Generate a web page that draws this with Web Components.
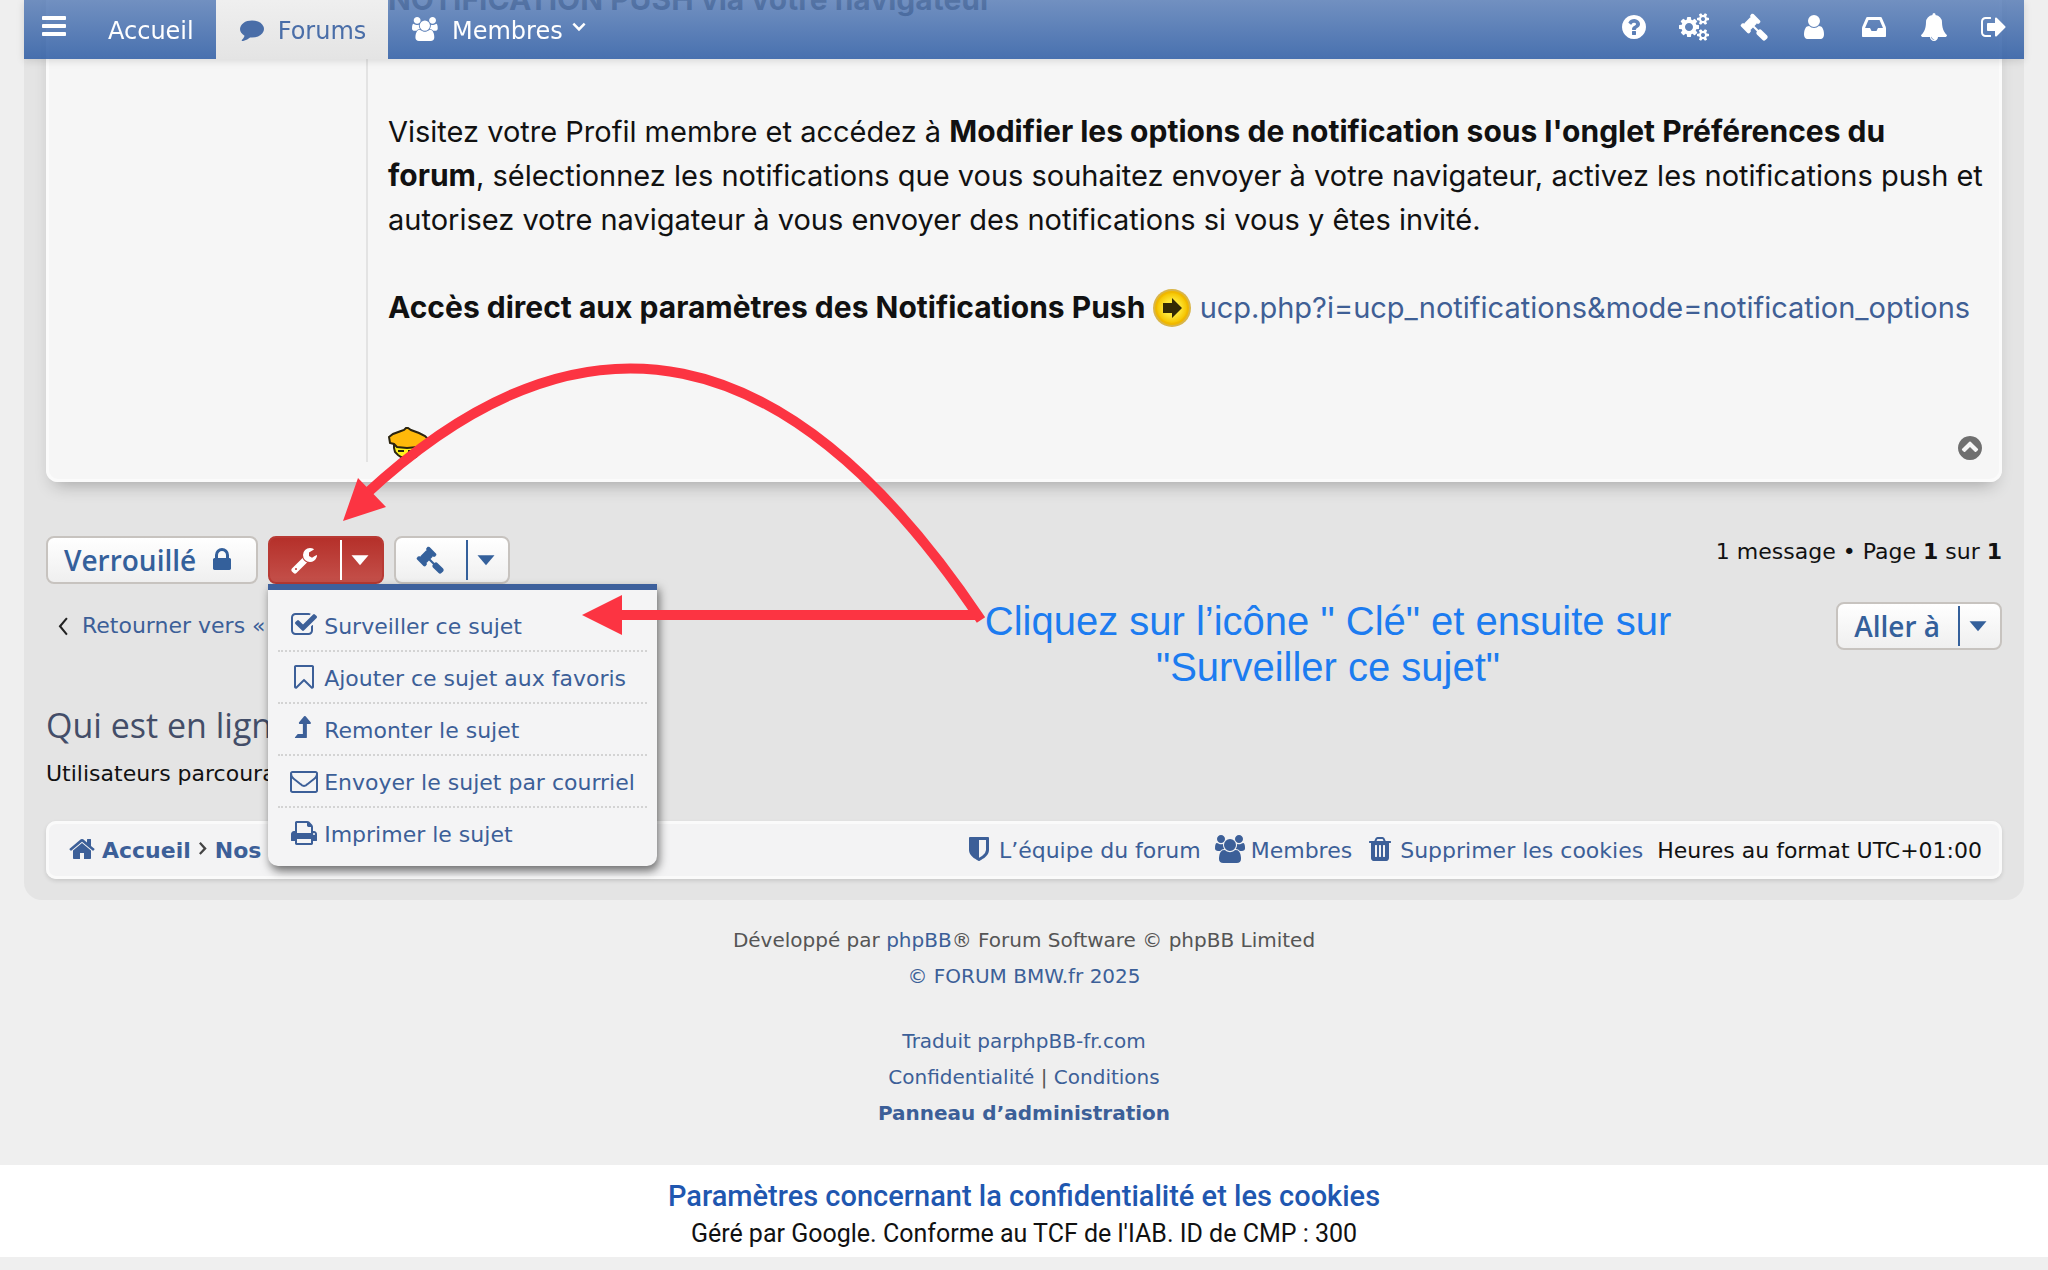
<!DOCTYPE html>
<html lang="fr">
<head>
<meta charset="utf-8">
<title>FORUM BMW.fr</title>
<style>
    body{
        margin: 0;
        background: #efefef;
        color: #111;
        font: 22px/32px "DejaVu Sans", Verdana, sans-serif;
        overflow-x: hidden;
    }
    main{
        position: relative;
        margin: 0 24px;
        padding: 0 22px 21px;
        background: #e4e4e4;
        border-radius: 0 0 18px 18px;
    }
</style>
</head>
<body>
<forum-nav></forum-nav>
<main>
    <forum-post>
        <b>NOTIFICATION PUSH via votre navigateur</b><br><br><br>
        Visitez votre Profil membre et accédez à <b>Modifier les options de notification sous l'onglet Préférences du</b><br>
        <b>forum</b>, sélectionnez les notifications que vous souhaitez envoyer à votre navigateur, activez les notifications push et autorisez votre navigateur à vous envoyer des notifications si vous y êtes invité.<br><br>
        <b>Accès direct aux paramètres des Notifications Push</b>
        <smiley-icon name="arrow"></smiley-icon>
        <a href="#">ucp.php?i=ucp_notifications&amp;mode=notification_options</a><br><br><br>
        <smiley-icon name="hat"></smiley-icon>
    </forum-post>
    <topic-actions></topic-actions>
    <who-online></who-online>
    <bottom-bar></bottom-bar>
    <arrow-note>Cliquez sur l’icône " Clé" et ensuite sur<br>"Surveiller ce sujet"</arrow-note>
</main>
<site-footer></site-footer>
<cookie-bar></cookie-bar>

<script>
// clase base: monta la plantilla en el shadow root
class BaseElement extends HTMLElement{
    constructor(){
        super();
        this.attachShadow({mode: 'open'});
    }
    render(){
        const template = document.createElement('template');
        template.innerHTML = `<style>${this.getStyle()}</style>${this.getTemplate()}`;
        this.shadowRoot.replaceChildren(template.content.cloneNode(true));
    }
    connectedCallback(){
        this.render();
    }
}

const circle = 'm371-243q0 209-103 385.5t-279.5 279.5-385.5 103-385.5-103-279.5-279.5-103-385.5 103-385.5 279.5-279.5 385.5-103 385.5 103 279.5 279.5 103 385.5z';
const smallCog = 'v140q0 16-149 31-12 27-30 52 51 113 51 138 0 4-4 7-122 71-124 71-8 0-46-47t-52-68q-20 2-30 2t-30-2q-14 21-52 68t-46 47q-2 0-124-71-4-3-4-7 0-25 51-138-18-25-30-52-149-15-149-31v-140q0-16 149-31 13-29 30-52-51-113-51-138 0-4 4-7 4-2 35-20t59-34 30-16q8 0 46 46.5t52 67.5q20-2 30-2t30 2q51-71 92-112l6-2q4 0 124 70 4 3 4 7 0 25-51 138 17 23 30 52 149 15 149 31z';

const icons = {
    bars: 'M1664 1344v128q0 26-19 45t-45 19h-1408q-26 0-45-19t-19-45v-128q0-26 19-45t45-19h1408q26 0 45 19t19 45zm0-512v128q0 26-19 45t-45 19h-1408q-26 0-45-19t-19-45v-128q0-26 19-45t45-19h1408q26 0 45 19t19 45zm0-512v128q0 26-19 45t-45 19h-1408q-26 0-45-19t-19-45v-128q0-26 19-45t45-19h1408q26 0 45 19t19 45z',
    comment: 'M1792 896q0 174-120 321.5t-326 233-450 85.5q-70 0-145-8-198 175-460 242-49 14-114 22-17 2-30.5-9t-17.5-29v-1q-3-4-.5-12t2-10 4.5-9.5l6-9 7-8.5 8-9q7-8 31-34.5t34.5-38 31-39.5 32.5-51 27-59 26-76q-157-89-247.5-220t-90.5-281q0-130 71-248.5t191-204.5 286-136.5 348-50.5q244 0 450 85.5t326 233 120 321.5z',
    users: 'M593 896q-162 5-265 128h-134q-82 0-138-40.5t-56-118.5q0-353 124-353 6 0 43.5 21t97.5 42.5 119 21.5q67 0 133-23-5 37-5 66 0 143 83 256zm1071 637q0 120-73 189.5t-194 69.5h-874q-121 0-194-69.5t-73-189.5q0-53 3.5-103.5t14-109 26.5-108.5 43-97.5 62-81 85.5-53.5 111.5-20q10 0 43 21.5t73 48 107 48 135 21.5 135-21.5 107-48 73-48 43-21.5q61 0 111.5 20t85.5 53.5 62 81 43 97.5 26.5 108.5 14 109 3.5 103.5zm-1024-1277q0 106-75 181t-181 75-181-75-75-181 75-181 181-75 181 75 75 181zm704 384q0 159-112.5 271.5t-271.5 112.5-271.5-112.5-112.5-271.5 112.5-271.5 271.5-112.5 271.5 112.5 112.5 271.5zm576 225q0 78-56 118.5t-138 40.5h-134q-103-123-265-128 83-113 83-256 0-29-5-66 66 23 133 23 59 0 119-21.5t97.5-42.5 43.5-21q124 0 124 353zm-128-609q0 106-75 181t-181 75-181-75-75-181 75-181 181-75 181 75 75 181z',
    question: 'M1024 1376v-192q0-14-9-23t-23-9h-192q-14 0-23 9t-9 23v192q0 14 9 23t23 9h192q14 0 23-9t9-23zm256-672q0-88-55.5-163t-138.5-116-170-41q-243 0-371 213-15 24 8 42l132 100q7 6 19 6 16 0 25-12 53-68 86-92 34-24 86-24 48 0 85.5 26t37.5 59q0 38-20 61t-68 45q-63 28-115.5 86.5t-52.5 125.5v36q0 14 9 23t23 9h192q14 0 23-9t9-23q0-19 21.5-49.5t54.5-49.5q32-18 49-28.5t46-35 44.5-48 28-60.5 12.5-81zm13 435' + circle,
    cogs: 'M896 896q0-106-75-181t-181-75-181 75-75 181 75 181 181 75 181-75 75-181zm768 512q0-52-38-90t-90-38-90 38-38 90q0 53 37.5 90.5t90.5 37.5 90.5-37.5 37.5-90.5zm0-1024q0-52-38-90t-90-38-90 38-38 90q0 53 37.5 90.5t90.5 37.5 90.5-37.5 37.5-90.5zm-384 421v185q0 10-7 19.5t-16 10.5l-155 24q-11 35-32 76 34 48 90 115 7 11 7 20 0 12-7 19-23 30-82.5 89.5t-78.5 59.5q-11 0-21-7l-115-90q-37 19-77 31-11 108-23 155-7 24-30 24h-186q-11 0-20-7.5t-10-17.5l-23-153q-34-10-75-31l-118 89q-7 7-20 7-11 0-21-8-144-133-144-160 0-9 7-19 10-14 41-53t47-61q-23-44-35-82l-152-24q-10-1-17-9.5t-7-19.5v-185q0-10 7-19.5t16-10.5l155-24q11-35 32-76-34-48-90-115-7-11-7-20 0-12 7-20 22-30 82-89t79-59q11 0 21 7l115 90q34-18 77-32 11-108 23-154 7-24 30-24h186q11 0 20 7.5t10 17.5l23 153q34 10 75 31l118-89q8-7 20-7 11 0 21 8 144 133 144 160 0 8-7 19-12 16-42 54t-45 60q23 48 34 82l152 23q10 2 17 10.5t7 19.5zm640 533' + smallCog + 'm0-1024' + smallCog,
    gavel: 'M1771 1536q0 53-37 90l-107 108q-39 37-91 37-53 0-90-37l-363-364q-38-36-38-90 0-53 43-96l-256-256-126 126q-14 14-34 14t-34-14q2 2 12.5 12t12.5 13 10 11.5 10 13.5 6 13.5 5.5 16.5 1.5 18q0 38-28 68-3 3-16.5 18t-19 20.5-18.5 16.5-20.5 15.5-22 9-26 4.5q-40 0-68-28l-408-408q-28-28-28-68 0-14 4.5-26t9-22 15.5-20.5 16.5-18.5 20.5-19 18-16.5q30-28 68-28 10 0 18 1.5t16.5 5.5 13.5 6 13.5 10 11.5 10 13 12.5 12 12.5q-14-14-14-34t14-34l348-348q14-14 34-14t34 14q-2-2-12.5-12t-12.5-13-10-11.5-10-13.5-6-13.5-5.5-16.5-1.5-18q0-38 28-68 3-3 16.5-18t19-20.5 18.5-16.5 20.5-15.5 22-9 26-4.5q40 0 68 28l408 408q28 28 28 68 0 14-4.5 26t-9 22-15.5 20.5-16.5 18.5-20.5 19-18 16.5q-30 28-68 28-10 0-18-1.5t-16.5-5.5-13.5-6-13.5-10-11.5-10-13-12.5-12-12.5q14 14 14 34t-14 34l-126 126 256 256q43-43 96-43 52 0 91 37l363 363q37 39 37 91z',
    user: 'M1536 1399q0 109-62.5 187t-150.5 78h-854q-88 0-150.5-78t-62.5-187q0-85 8.5-160.5t31.5-152 58.5-131 94-89 134.5-34.5q131 128 313 128t313-128q76 0 134.5 34.5t94 89 58.5 131 31.5 152 8.5 160.5zm-256-887q0 159-112.5 271.5t-271.5 112.5-271.5-112.5-112.5-271.5 112.5-271.5 271.5-112.5 271.5 112.5 112.5 271.5z',
    inbox: 'M1151 960h316q-1-3-2.5-8.5t-2.5-7.5l-212-496h-708l-212 496q-1 3-2.5 8.5t-2.5 7.5h316l95 192h320zm513 30v482q0 26-19 45t-45 19h-1408q-26 0-45-19t-19-45v-482q0-62 25-123l238-552q10-25 36.5-42t52.5-17h832q26 0 52.5 17t36.5 42l238 552q25 61 25 123z',
    bell: 'M912 1696q0-16-16-16-59 0-101.5-42.5t-42.5-101.5q0-16-16-16t-16 16q0 73 51.5 124.5t124.5 51.5q16 0 16-16zm816-288q0 52-38 90t-90 38h-448q0 106-75 181t-181 75-181-75-75-181h-448q-52 0-90-38t-38-90q50-42 91-88t85-119.5 74.5-158.5 50-206 19.5-260q0-152 117-282.5t307-158.5q-8-19-8-39 0-40 28-68t68-28 68 28 28 68q0 20-8 39 190 28 307 158.5t117 282.5q0 139 19.5 260t50 206 74.5 158.5 85 119.5 91 88z',
    signout: 'M704 1440q0 4 1 20t.5 26.5-3 23.5-10 19.5-20.5 6.5h-320q-119 0-203.5-84.5t-84.5-203.5v-704q0-119 84.5-203.5t203.5-84.5h320q13 0 22.5 9.5t9.5 22.5q0 4 1 20t.5 26.5-3 23.5-10 19.5-20.5 6.5h-320q-66 0-113 47t-47 113v704q0 66 47 113t113 47h312l11.5 1 11.5 3 8 5.5 7 9 2 13.5zm928-544q0 26-19 45l-544 544q-19 19-45 19t-45-19-19-45v-288h-448q-26 0-45-19t-19-45v-384q0-26 19-45t45-19h448v-288q0-26 19-45t45-19 45 19l544 544q19 19 19 45z',
    lock: 'M640 768h512v-192q0-106-75-181t-181-75-181 75-75 181v192zm832 96v576q0 40-28 68t-68 28h-960q-40 0-68-28t-28-68v-576q0-40 28-68t68-28h32v-192q0-184 132-316t316-132 316 132 132 316v192h32q40 0 68 28t28 68z',
    wrench: 'M448 1472q0-26-19-45t-45-19-45 19-19 45 19 45 45 19 45-19 19-45zm644-420l-682 682q-37 37-90 37-52 0-91-37l-106-108q-38-36-38-90 0-53 38-91l681-681q39 98 114.5 173.5t173.5 114.5zm634-435q0 39-23 106-47 134-164.5 217.5t-258.5 83.5q-185 0-316.5-131.5t-131.5-316.5 131.5-316.5 316.5-131.5q58 0 121.5 16.5t107.5 46.5q16 11 16 28t-16 28l-293 169v224l193 107q5-3 79-48.5t135.5-81 70.5-35.5q15 0 23.5 10t8.5 25z',
    check: 'M1472 930v318q0 119-84.5 203.5t-203.5 84.5h-832q-119 0-203.5-84.5t-84.5-203.5v-832q0-119 84.5-203.5t203.5-84.5h832q63 0 117 25 15 7 18 23 3 17-9 29l-49 49q-10 10-23 10-3 0-9-2-23-6-45-6h-832q-66 0-113 47t-47 113v832q0 66 47 113t113 47h832q66 0 113-47t47-113v-254q0-13 9-22l64-64q10-10 23-10 6 0 12 3 20 8 20 29zm231-489l-814 814q-24 24-57 24t-57-24l-430-430q-24-24-24-57t24-57l110-110q24-24 57-24t57 24l263 263 647-647q24-24 57-24t57 24l110 110q24 24 24 57t-24 57z',
    bookmark: 'M1408 256h-1024v1242l423-406 89-85 89 85 423 406v-1242zm12-128q23 0 44 9 33 13 52.5 41t19.5 62v1289q0 34-19.5 62t-52.5 41q-19 8-44 8-48 0-83-32l-441-424-441 424q-36 33-83 33-23 0-44-9-33-13-52.5-41t-19.5-62v-1289q0-34 19.5-62t52.5-41q21-9 44-9h1048z',
    levelup: 'M1331 536q-18 40-59 40h-192v864q0 14-9 23t-23 9h-704q-21 0-29-18-8-20 4-35l160-192q9-11 25-11h320v-640h-192q-40 0-59-40-17-38 9-69l320-384q18-22 49-22t49 22l320 384q27 32 9 69z',
    envelope: 'M1664 1504v-768q-32 36-69 66-268 206-426 338-51 43-83 67t-86.5 48.5-102.5 24.5h-2q-48 0-102.5-24.5t-86.5-48.5-83-67q-158-132-426-338-37-30-69-66v768q0 13 9.5 22.5t22.5 9.5h1472q13 0 22.5-9.5t9.5-22.5zm0-1051v-24.5l-.5-13-3-12.5-5.5-9-9-7.5-14-2.5h-1472q-13 0-22.5 9.5t-9.5 22.5q0 168 147 284 193 152 401 317 6 5 35 29.5t46 37.5 44.5 31.5 50.5 27.5 43 9h2q20 0 43-9t50.5-27.5 44.5-31.5 46-37.5 35-29.5q208-165 401-317 54-43 100.5-115.5t46.5-131.5zm128-37v1088q0 66-47 113t-113 47h-1472q-66 0-113-47t-47-113v-1088q0-66 47-113t113-47h1472q66 0 113 47t47 113z',
    print: 'M448 1536h896v-256h-896v256zm0-640h896v-384h-160q-40 0-68-28t-28-68v-160h-640v640zm1152 64q0-26-19-45t-45-19-45 19-19 45 19 45 45 19 45-19 19-45zm128 0v416q0 13-9.5 22.5t-22.5 9.5h-224v160q0 40-28 68t-68 28h-960q-40 0-68-28t-28-68v-160h-224q-13 0-22.5-9.5t-9.5-22.5v-416q0-79 56.5-135.5t135.5-56.5h64v-544q0-40 28-68t68-28h672q40 0 88 20t76 48l152 152q28 28 48 76t20 88v256h64q79 0 135.5 56.5t56.5 135.5z',
    home: 'M1472 992v480q0 26-19 45t-45 19h-384v-384h-256v384h-384q-26 0-45-19t-19-45v-480q0-1 .5-3t.5-3l575-474 575 474q1 2 1 6zm223-69l-62 74q-8 9-21 11h-3q-13 0-21-7l-692-577-692 577q-12 8-24 7-13-2-21-11l-62-74q-8-10-7-23.5t11-21.5l719-599q32-26 76-26t76 26l244 204v-195q0-14 9-23t23-9h192q14 0 23 9t9 23v408l219 182q10 8 11 21.5t-7 23.5z',
    shield: 'M1344 960v-640h-448v1137q119-63 213-137 235-184 235-360zm192-768v768q0 86-33.5 170.5t-83 150-118 127.5-126.5 103-121 77.5-89.5 49.5-42.5 20q-12 6-26 6t-26-6q-16-7-42.5-20t-89.5-49.5-121-77.5-126.5-103-118-127.5-83-150-33.5-170.5v-768q0-26 19-45t45-19h1152q26 0 45 19t19 45z',
    trash: 'M704 1376v-704q0-14-9-23t-23-9h-64q-14 0-23 9t-9 23v704q0 14 9 23t23 9h64q14 0 23-9t9-23zm256 0v-704q0-14-9-23t-23-9h-64q-14 0-23 9t-9 23v704q0 14 9 23t23 9h64q14 0 23-9t9-23zm256 0v-704q0-14-9-23t-23-9h-64q-14 0-23 9t-9 23v704q0 14 9 23t23 9h64q14 0 23-9t9-23zm-544-992h448l-48-117q-7-9-17-11h-317q-10 2-17 11zm928 32v64q0 14-9 23t-23 9h-96v948q0 83-47 143.5t-113 60.5h-832q-66 0-113-58.5t-47-141.5v-952h-96q-14 0-23-9t-9-23v-64q0-14 9-23t23-9h309l70-167q15-37 54-63t79-26h320q40 0 79 26t54 63l70 167h309q14 0 23 9t9 23z',
    circleup: 'M1293 1139l102-102q19-19 19-45t-19-45l-454-454q-19-19-45-19t-45 19l-454 454q-19 19-19 45t19 45l102 102q19 19 45 19t45-19l307-307 307 307q19 19 45 19t45-19z' + circle,
    caret: 'M352 590h1088l-544 640z',
    down: 'M410 560l130-130 356 356 356-356 130 130-486 500z',
    left: 'M1160 350l100 80-400 486 400 486-100 80-480-566z',
    right: 'M600 480l120-110 450 480-450 480-120-110 330-370z'
};

class FaIcon extends BaseElement{
    getTemplate(){
        const name = this.getAttribute('name');
        const width = name === 'users' || name === 'cogs' ? 1920 : 1792;
        return `<svg viewBox="0 0 ${width} 1792" aria-hidden="true"><path d="${icons[name]}"/></svg>`;
    }
    getStyle(){
        return `
            :host{ display: inline-flex; flex: none; height: var(--icon-size, 28px); }
            svg{ height: 100%; fill: currentColor; overflow: visible; }
        `;
    }
}

class SmileyIcon extends BaseElement{
    getTemplate(){
        if(this.getAttribute('name') === 'arrow'){
            return `<svg width="38" height="40" viewBox="1 0 38 40" role="img" aria-label="flèche">
                <defs><radialGradient id="g"><stop offset=".5" stop-color="#ffe83a"/><stop offset="1" stop-color="#f5c400"/></radialGradient></defs>
                <circle cx="20" cy="20" r="19" fill="#d9b548"/>
                <circle cx="20" cy="20" r="17" fill="#f0b800"/>
                <circle cx="20" cy="20" r="15" fill="url(#g)"/>
                <path d="M11 15h9v-5l10 10-10 10v-5h-9z" fill="#332a05"/>
            </svg>`;
        }
        return `<svg width="42" height="40" viewBox="0 -7 42 40" role="img" aria-label="chapeau">
            <path d="M6 15v6l1 4 3 3 3 2 5 2h5l5-2 4-4 2-4 1-8z" fill="#fff21c" stroke="#2b2410" stroke-width="2"/>
            <path d="M1 10l4-3 8-3 3-1 2-2h2l3 2 8 3 6 3 3 3-2 4-4 2-4 2-11 1-10-1-3-3-4-1z" fill="#ffb90a" stroke="#2b2410" stroke-width="2"/>
            <path d="M10 24h6M20 24h6" fill="none" stroke="#2b2410" stroke-width="2"/>
        </svg>`;
    }
    getStyle(){
        return `
            :host{ display: inline-flex; vertical-align: -10px; height: 40px; }
        `;
    }
}

class ForumNav extends BaseElement{
    getTemplate(){
        const tools = [['question', 'Aide'], ['cogs', 'Administration'], ['gavel', 'Modération'], ['user', 'Profil'], ['inbox', 'Messages'], ['bell', 'Notifications'], ['signout', 'Déconnexion']];
        return `
            <nav>
                <button aria-label="Menu"><fa-icon name="bars"></fa-icon></button>
                <a href="#">Accueil</a>
                <a href="#" class="active"><fa-icon name="comment"></fa-icon>Forums</a>
                <a href="#"><fa-icon name="users"></fa-icon>Membres<fa-icon name="down" class="down"></fa-icon></a>
                <div>${tools.map(([icon, label]) => `<a href="#" aria-label="${label}"><fa-icon name="${icon}"></fa-icon></a>`).join('')}</div>
            </nav>
        `;
    }
    getStyle(){
        return `
            :host{ display: block; position: fixed; top: 0; left: 24px; right: 24px; z-index: 5; }
            nav{
                display: flex;
                height: 59px;
                background: linear-gradient(rgba(95,130,185,.88), rgba(48,94,165,.88));
                box-shadow: 0 2px 8px rgba(0,0,0,.12);
                font-size: 24px;
                line-height: 58px;
            }
            button{ border: 0; background: none; color: #fff; padding: 0 0 4px 16px; width: 60px; text-align: left; }
            a{ display: flex; align-items: center; color: #fff; text-decoration: none; }
            nav > a{ --icon-size: 24px; gap: 14px; padding: 2px 22px 0 24px; }
            nav > a fa-icon{ margin-top: -4px; }
            .active{ background: linear-gradient(#efefef, #e4e4e4); color: #4a6ea8; }
            nav > a .down{ margin-left: -10px; }
            div{ display: flex; margin-left: auto; }
            div a{ width: 60px; padding: 0 0 6px; justify-content: center; }
        `;
    }
}

class ForumPost extends BaseElement{
    getTemplate(){
        return `
            <article>
                <aside></aside>
                <div><slot></slot></div>
                <a href="#" aria-label="Haut"><fa-icon name="circleup"></fa-icon></a>
            </article>
        `;
    }
    getStyle(){
        return `
            :host{ display: block; margin-top: -22px; }
            article{
                position: relative;
                display: flex;
                padding-bottom: 20px;
                background: #f6f6f6;
                border-radius: 0 0 12px 12px;
                box-shadow: 0 10px 18px -8px rgba(0,0,0,.3), inset 0 0 0 3px #fbfbfb;
            }
            aside{ width: 320px; flex: none; border-right: 2px solid #e3e3e3; }
            div{ flex: 1; padding: 0 12px 0 20px; font: 29px/44px Inter, sans-serif; }
            ::slotted(b){ font-size: 30px; line-height: 30px; }
            ::slotted(a){ color: #3f5f95; text-decoration: none; }
            a{ position: absolute; right: 18px; bottom: 20px; color: #6f6f6f; display: flex; }
        `;
    }
}

class SplitButton extends BaseElement{
    getTemplate(){
        return `<button><slot></slot>${this.hasAttribute('plain') ? '' : '<span><fa-icon name="caret"></fa-icon></span>'}</button>`;
    }
    getStyle(){
        return `
            :host{ display: inline-flex; }
            button{
                box-sizing: border-box;
                height: 48px;
                display: flex;
                align-items: center;
                gap: 18px;
                padding: 0 8px 0 16px;
                border: 2px solid #c7c3bf;
                border-radius: 8px;
                background: linear-gradient(#fff, #efefef);
                color: #34609b;
                font: 600 28px/40px "Open Sans", sans-serif;
            }
            ::slotted(fa-icon){ margin: 0 4px; }
            span{
                display: flex;
                align-items: center;
                height: 40px;
                padding-left: 4px;
                border-left: 2px solid currentColor;
            }
            :host([plain]) button{ gap: 8px; padding-right: 16px; }
            :host([active]) button{ background: linear-gradient(#b5302a, #c4504a); border-color: #b83a34; color: #fff; }
        `;
    }
}

class TopicMenu extends BaseElement{
    getTemplate(){
        const items = [['check', 'Surveiller ce sujet'], ['bookmark', 'Ajouter ce sujet aux favoris'], ['levelup', 'Remonter le sujet'], ['envelope', 'Envoyer le sujet par courriel'], ['print', 'Imprimer le sujet']];
        return `<ul>${items.map(([icon, text]) => `<li><a href="#"><fa-icon name="${icon}"></fa-icon>${text}</a></li>`).join('')}</ul>`;
    }
    getStyle(){
        return `
            :host{ display: block; }
            ul{
                list-style: none;
                margin: 0;
                padding: 10px 10px 8px;
                border-top: 6px solid #3d609c;
                border-radius: 0 0 10px 10px;
                background: #f4f4f5;
                box-shadow: 2px 5px 10px rgba(0,0,0,.55);
            }
            li + li{ border-top: 2px dotted #d3d3d3; }
            a{
                display: flex;
                align-items: center;
                gap: 6px;
                height: 50px;
                padding: 4px 12px 0;
                box-sizing: border-box;
                color: #3c5f98;
                text-decoration: none;
                white-space: nowrap;
            }
            fa-icon{ margin-top: -4px; }
        `;
    }
}

class TopicActions extends BaseElement{
    getTemplate(){
        return `
            <div class="bar">
                <split-button plain>Verrouillé<fa-icon name="lock"></fa-icon></split-button>
                <div class="tools">
                    <split-button active><fa-icon name="wrench"></fa-icon></split-button>
                    <topic-menu></topic-menu>
                </div>
                <split-button><fa-icon name="gavel"></fa-icon></split-button>
                <p>1 message • Page <b>1</b> sur <b>1</b></p>
            </div>
            <div class="jump">
                <a href="#"><fa-icon name="left"></fa-icon>Retourner vers «</a>
                <split-button>Aller à</split-button>
            </div>
        `;
    }
    getStyle(){
        return `
            :host{ display: block; margin-top: 54px; }
            .bar{ display: flex; gap: 10px; }
            .tools{ position: relative; display: flex; }
            topic-menu{ position: absolute; top: 48px; left: 0; width: 389px; z-index: 2; }
            p{ margin: 0 0 0 auto; }
            .jump{ display: flex; justify-content: space-between; align-items: center; margin-top: 18px; }
            .jump a{ display: flex; align-items: center; gap: 6px; padding-left: 2px; color: #3c5f98; text-decoration: none; }
            .jump a fa-icon{ color: #222; }
        `;
    }
}

class WhoOnline extends BaseElement{
    getTemplate(){
        return `
            <h3>Qui est en ligne</h3>
            <p>Utilisateurs parcourant</p>
        `;
    }
    getStyle(){
        return `
            :host{ display: block; margin: 50px 0 31px; }
            h3{ margin: 0; color: #434d68; font: 400 34px/50px "Open Sans", sans-serif; }
            p{ margin: 8px 0 0; }
        `;
    }
}

class BottomBar extends BaseElement{
    getTemplate(){
        return `
            <div>
                <nav>
                    <a href="#"><fa-icon name="home"></fa-icon>Accueil</a>
                    <fa-icon name="right" class="sep"></fa-icon>
                    <a href="#">Nos</a>
                </nav>
                <a href="#"><fa-icon name="shield"></fa-icon>L’équipe du forum</a>
                <a href="#"><fa-icon name="users"></fa-icon>Membres</a>
                <a href="#"><fa-icon name="trash"></fa-icon>Supprimer les cookies</a>
                <span>Heures au format UTC+01:00</span>
            </div>
        `;
    }
    getStyle(){
        return `
            :host{ display: block; }
            div{
                display: flex;
                align-items: center;
                gap: 14px;
                box-sizing: border-box;
                height: 58px;
                padding: 2px 20px 0 22px;
                border-radius: 10px;
                background: #f3f3f4;
                box-shadow: inset 0 0 0 3px #fafafa, 0 2px 4px rgba(0,0,0,.12);
            }
            nav{ display: flex; align-items: center; margin-right: auto; font-weight: bold; }
            a{ display: flex; align-items: center; gap: 6px; color: #3c5f98; text-decoration: none; }
            fa-icon{ margin-top: -4px; }
            .sep{ --icon-size: 24px; color: #444; }
        `;
    }
}

class SiteFooter extends BaseElement{
    getTemplate(){
        return `
            <p>Développé par <a href="#">phpBB</a>® Forum Software © phpBB Limited<br><a href="#">© FORUM BMW.fr 2025</a></p>
            <p><a href="#">Traduit parphpBB-fr.com</a><br><a href="#">Confidentialité</a> | <a href="#">Conditions</a><br><a href="#"><b>Panneau d’administration</b></a></p>
        `;
    }
    getStyle(){
        return `
            :host{ display: block; padding: 22px 0 34px; text-align: center; color: #555; font-size: 20px; line-height: 36px; }
            p{ margin: 0; }
            p + p{ margin-top: 29px; }
            a{ color: #3c5f98; text-decoration: none; }
        `;
    }
}

class CookieBar extends BaseElement{
    getTemplate(){
        return `
            <a href="#">Paramètres concernant la confidentialité et les cookies</a>
            <p>Géré par Google. Conforme au TCF de l'IAB. ID de CMP : 300</p>
        `;
    }
    getStyle(){
        return `
            :host{ display: block; margin-bottom: 12px; padding: 12px 0 4px; background: #fff; text-align: center; font-family: Roboto, sans-serif; }
            a{ color: #1f57b0; text-decoration: none; font-size: 29px; font-weight: 500; line-height: 38px; display: block; }
            p{ margin: 0; color: #111; font-size: 25px; line-height: 38px; }
        `;
    }
}

// flechas rojas y texto de ayuda por encima del tema
class ArrowNote extends BaseElement{
    getTemplate(){
        return `
            <svg width="700" height="300" viewBox="320 350 700 300" aria-hidden="true">
                <path d="M365 495Q693 190 981 620M979 615H620" fill="none" stroke="#fc3442" stroke-width="10"/>
                <path d="M343 521l15-43 28 29zM582 615l40-20v40z" fill="#fc3442"/>
            </svg>
            <p><slot></slot></p>
        `;
    }
    getStyle(){
        return `
            :host{ position: absolute; top: 372px; left: 296px; z-index: 3; pointer-events: none; }
            svg{ display: block; }
            p{
                position: absolute;
                top: 248px;
                left: 660px;
                width: 696px;
                margin: 0;
                text-align: center;
                color: #1c7cf0;
                font: 40px/46px "Liberation Sans", Arial, sans-serif;
            }
        `;
    }
}

customElements.define('fa-icon', FaIcon);
customElements.define('smiley-icon', SmileyIcon);
customElements.define('split-button', SplitButton);
customElements.define('topic-menu', TopicMenu);
customElements.define('forum-nav', ForumNav);
customElements.define('forum-post', ForumPost);
customElements.define('topic-actions', TopicActions);
customElements.define('who-online', WhoOnline);
customElements.define('bottom-bar', BottomBar);
customElements.define('site-footer', SiteFooter);
customElements.define('cookie-bar', CookieBar);
customElements.define('arrow-note', ArrowNote);
</script>
</body>
</html>
